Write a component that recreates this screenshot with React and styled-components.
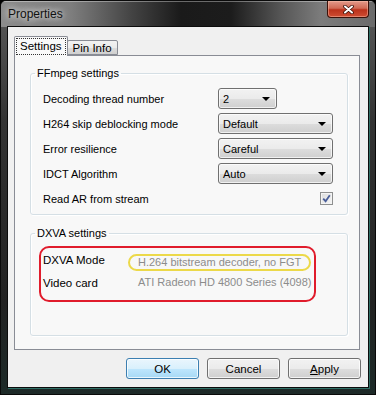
import React from "react";
import styled, { createGlobalStyle } from "styled-components";

const GlobalStyle = createGlobalStyle`
  html, body {
    margin: 0;
    padding: 0;
    background: #000;
  }
  * { box-sizing: border-box; }
`;

const ffmpegRows = [
  { label: "Decoding thread number", value: "2", width: 59 },
  { label: "H264 skip deblocking mode", value: "Default", width: 115 },
  { label: "Error resilience", value: "Careful", width: 115 },
  { label: "IDCT Algorithm", value: "Auto", width: 115 },
];

const dxvaRows = [
  { label: "DXVA Mode", value: "H.264 bitstream decoder, no FGT", circled: true },
  { label: "Video card", value: "ATI Radeon HD 4800 Series (4098)" },
];

const App = () => {
  return (
    <>
      <GlobalStyle />
      <Window>
        <TitleBar>
          <Title>Properties</Title>
          <CloseButton>
            <svg width="11" height="9" viewBox="0 0 11 9">
              <path d="M2 1.5 L9 7.5 M9 1.5 L2 7.5" stroke="#3a1008" strokeWidth="3.6" strokeLinecap="round" />
              <path d="M2 1.5 L9 7.5 M9 1.5 L2 7.5" stroke="#fff" strokeWidth="2" strokeLinecap="round" />
            </svg>
          </CloseButton>
        </TitleBar>
        <Client>
          <TabStrip>
            <Tab active>
              <FocusText>Settings</FocusText>
            </Tab>
            <Tab>Pin Info</Tab>
          </TabStrip>
          <Panel>
            <Group>
              <Legend>FFmpeg settings</Legend>
              <SettingsGrid>
                {ffmpegRows.map((r) => (
                  <Row key={r.label}>
                    <Label>{r.label}</Label>
                    <Combo style={{ width: r.width }}>
                      <span>{r.value}</span>
                      <Arrow />
                    </Combo>
                  </Row>
                ))}
                <Row>
                  <Label>Read AR from stream</Label>
                  <CheckBox>
                    <svg width="9" height="9" viewBox="0 0 9 9">
                      <path d="M1.2 4.6 L3.6 7.2 L7.8 1.2" stroke="#4b5f9a" strokeWidth="1.8" fill="none" />
                    </svg>
                  </CheckBox>
                </Row>
              </SettingsGrid>
            </Group>
            <Group grow>
              <Legend>DXVA settings</Legend>
              <DxvaBody>
                <Highlight>
                  {dxvaRows.map((r) => (
                    <InfoRow key={r.label}>
                      <InfoLabel>{r.label}</InfoLabel>
                      <Value circled={r.circled}>{r.value}</Value>
                    </InfoRow>
                  ))}
                </Highlight>
              </DxvaBody>
            </Group>
          </Panel>
          <ButtonRow>
            <Button primary>OK</Button>
            <Button>Cancel</Button>
            <Button>
              <u>A</u>pply
            </Button>
          </ButtonRow>
        </Client>
      </Window>
    </>
  );
};

const Window = styled.div`
  width: 376px;
  height: 395px;
  display: flex;
  flex-direction: column;
  border: 1px solid #0a0a0a;
  border-radius: 6px 6px 0 0;
  overflow: hidden;
  background: linear-gradient(to bottom, #5c5c5c 0px, #333 120px, #222 300px, #1d2a28 100%);
  font-family: "Liberation Sans", Arial, sans-serif;
  font-size: 11px;
  color: #000;
`;

const TitleBar = styled.div`
  height: 26px;
  flex: none;
  display: flex;
  align-items: flex-start;
  justify-content: space-between;
  padding-left: 7px;
  background: linear-gradient(
    to right,
    #8c8c8c 0px,
    #7e7e7e 70px,
    #444 130px,
    #1a1a1a 180px,
    #1c1c1c 230px,
    #565656 280px,
    #7c7c7c 320px,
    #6a6a6a 376px
  );
  box-shadow: inset 0 1px 0 rgba(255, 255, 255, 0.35);
`;

const Title = styled.div`
  font-family: "Liberation Sans", Arial, sans-serif;
  font-size: 12px;
  line-height: 14px;
  margin-top: 6px;
  color: #111;
  text-shadow: 0 0 6px rgba(255, 255, 255, 0.9), 0 0 10px rgba(255, 255, 255, 0.6);
`;

const CloseButton = styled.div`
  width: 42px;
  height: 17px;
  margin-right: 6px;
  display: flex;
  align-items: center;
  justify-content: center;
  border: 1px solid #3b1109;
  border-top: none;
  border-radius: 0 0 4px 4px;
  background: linear-gradient(to bottom, #e39a8a 0%, #d06a55 45%, #bb321b 55%, #cf4d33 100%);
  box-shadow: inset 0 0 0 1px rgba(255, 200, 180, 0.45);
`;

const Client = styled.div`
  flex: 1;
  margin: 0 7px 7px 7px;
  display: flex;
  flex-direction: column;
  padding: 9px 8px 8px 6px;
  background: #f0f0f0;
  box-shadow: 0 0 0 1px #0c0c0c, 1px 1px 0 1px #2f6f66;
`;

const TabStrip = styled.div`
  display: flex;
  align-items: flex-end;
  height: 19px;
  position: relative;
  z-index: 1;
`;

const Tab = styled.div`
  height: ${(p) => (p.active ? "20px" : "15px")};
  margin-bottom: ${(p) => (p.active ? "-1px" : "0")};
  padding: ${(p) => (p.active ? "2px 2px 0 2px" : "0 5px")};
  display: flex;
  align-items: ${(p) => (p.active ? "flex-start" : "center")};
  border: 1px solid #898c95;
  border-bottom: ${(p) => (p.active ? "none" : "1px solid #898c95")};
  border-radius: 2px 2px 0 0;
  margin-left: ${(p) => (p.active ? "0" : "-1px")};
  background: ${(p) =>
    p.active
      ? "#f9f9f9"
      : "linear-gradient(to bottom, #f2f2f2 0%, #ebebeb 50%, #dddddd 51%, #cfcfcf 100%)"};
  font-size: 11.5px;
  line-height: 14px;
  white-space: nowrap;
`;

const FocusText = styled.span`
  padding: 0 3px 1px 3px;
  outline: 1px dotted #333;
  outline-offset: 0;
`;

const Panel = styled.div`
  flex: 1;
  display: flex;
  flex-direction: column;
  gap: 12px;
  padding: 11px 11px 13px 15px;
  border: 1px solid #898c95;
  background: #f8f8f8;
`;

const Group = styled.fieldset`
  margin: 0;
  padding: 0;
  min-width: 0;
  flex: ${(p) => (p.grow ? "1" : "none")};
  border: 1px solid #d5dfe5;
  border-radius: 3px;
  box-shadow: inset 1px 1px 0 #fff, 1px 1px 0 #fff;
`;

const Legend = styled.legend`
  margin-left: 4px;
  padding: 0 2px;
  font-size: 11px;
  line-height: 13px;
  color: #000;
`;

const SettingsGrid = styled.div`
  padding: 6px 14px 3px 12px;
`;

const Row = styled.div`
  height: 25px;
  display: grid;
  grid-template-columns: 175px 1fr;
  align-items: center;
`;

const Label = styled.div`
  white-space: nowrap;
`;

const Combo = styled.div`
  height: 21px;
  display: flex;
  align-items: center;
  justify-content: space-between;
  padding: 0 6px 0 4px;
  border: 1px solid #707070;
  border-radius: 3px;
  background: linear-gradient(to bottom, #f2f2f2 0%, #ebebeb 50%, #dddddd 51%, #cfcfcf 100%);
  box-shadow: inset 0 0 0 1px rgba(255, 255, 255, 0.7);
`;

const Arrow = styled.span`
  width: 0;
  height: 0;
  border-left: 4px solid transparent;
  border-right: 4px solid transparent;
  border-top: 4px solid #000;
`;

const CheckBox = styled.div`
  justify-self: end;
  width: 13px;
  height: 13px;
  display: flex;
  align-items: center;
  justify-content: center;
  border: 1px solid #8e8f8f;
  background: linear-gradient(135deg, #dcdcdc 0%, #f6f6f6 100%);
  box-shadow: inset 0 0 0 1px #f4f4f4;
`;

const DxvaBody = styled.div`
  padding: 6px 0 0 8px;
`;

const Highlight = styled.div`
  width: 277px;
  display: flex;
  flex-direction: column;
  gap: 8px;
  padding: 0 0 8px 2px;
  border: 2px solid #e01c2c;
  border-radius: 10px;
`;

const InfoRow = styled.div`
  height: 18px;
  display: grid;
  grid-template-columns: 85px 1fr;
  align-items: center;
`;

const InfoLabel = styled.div`
  font-size: 11.5px;
  white-space: nowrap;
`;

const Value = styled.span`
  justify-self: start;
  height: 17px;
  margin-top: ${(p) => (p.circled ? "6px" : "0")};
  padding: 0 8px 2px 8px;
  display: flex;
  align-items: center;
  border: 2px solid ${(p) => (p.circled ? "#ecd94a" : "transparent")};
  border-radius: 10px;
  color: #8c8c8c;
  white-space: nowrap;
  line-height: 12px;
  font-size: 11px;
`;

const ButtonRow = styled.div`
  display: flex;
  justify-content: flex-end;
  gap: 8px;
  margin-top: 8px;
  margin-right: -1px;
`;

const Button = styled.div`
  width: 73px;
  height: 21px;
  display: flex;
  align-items: center;
  justify-content: center;
  border: 1px solid ${(p) => (p.primary ? "#3c7fb1" : "#707070")};
  border-radius: 3px;
  background: ${(p) =>
    p.primary
      ? "linear-gradient(to bottom, #eaf6fd 0%, #d9f0fc 50%, #bee6fd 51%, #a7d9f5 100%)"
      : "linear-gradient(to bottom, #f2f2f2 0%, #ebebeb 50%, #dddddd 51%, #cfcfcf 100%)"};
  box-shadow: inset 0 0 0 1px rgba(255, 255, 255, 0.75);
  font-size: 11.5px;
`;

export default App;
